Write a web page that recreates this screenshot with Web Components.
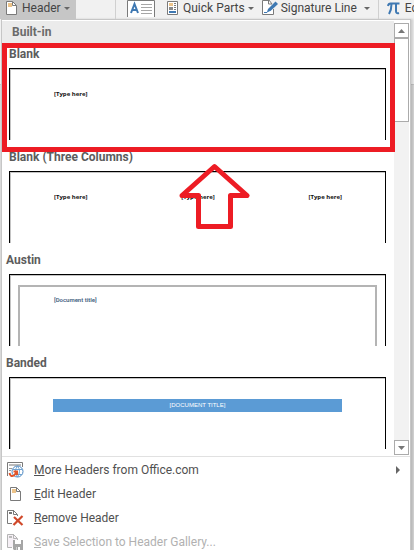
<!DOCTYPE html>
<html lang="en">
<head>
<meta charset="utf-8">
<meta name="viewport" content="width=device-width, initial-scale=1">
<title>Header gallery</title>
<style>
  body {
    margin: 0;
    height: 100vh;
    overflow: hidden;
    font: 12px/16px Roboto, "Open Sans", sans-serif;
    color: #444;
    background: linear-gradient(#f1f1f1 84px, #c6c6c6 84px, #c6c6c6 85px, #d9d9d9 85px);
  }
</style>
</head>
<body>
<header-page></header-page>

<script>
const icons = {
  page: `<svg width="11" height="14" viewBox="0 0 11 14"><path d="M.5.5h6l4 4v9H.5z" fill="#fff" stroke="#7a7a7a"/><path d="M6.500.5v4h4" fill="none" stroke="#7a7a7a"/><path d="M2 2h4v4H2z" fill="#edc48a"/></svg>`,
  textbox: `<svg width="28" height="17" viewBox="0 0 28 17"><path d="M.5.5h27v18H.5z" fill="#fff" stroke="#7a7a7a"/><path d="M14 4.500h11M14 7.500h11M14 10.500h11M14 13.500h11" stroke="#a6a6a6"/><path d="M4 13 7.500 4 11 13M5 10h5" fill="none" stroke="#3e78b2" stroke-width="2"/></svg>`,
  parts: `<svg width="11" height="14" viewBox="0 0 11 14"><path d="M.5.5h10v13H.5z" fill="#fff" stroke="#7a7a7a"/><path d="M2 2h4v3H2z" fill="#edc48a"/><path d="M7 2.500h2M7 4.500h2M7 6.500h2M7 8.500h2" stroke="#7a7a7a"/><path d="M2 6h4v3H2z" fill="#8a8a8a"/><path d="M2 10h7v2H2z" fill="#3e78b2"/></svg>`,
  signature: `<svg width="16" height="16" viewBox="0 0 16 16"><path d="M6 .5H.5v14h11V9" fill="#fff" stroke="#7a7a7a"/><path d="M6.500 0v4H10L7 0" fill="#fff" stroke="#7a7a7a"/><path d="M5 12 6 9 13.500 1.500 16 4 8.500 11z" fill="#3e78b2"/><path d="M2 12.500h3l2-2" fill="none" stroke="#3e78b2"/></svg>`,
  pi: `<svg width="13" height="13" viewBox="0 0 13 13"><path d="M1 4Q1.500 1.500 3.500 1.500H12.500M4.500 2Q4.500 8 2 12M9 2v7q0 3 3 2" fill="none" stroke="#3e78b2" stroke-width="2"/></svg>`,
  web: `<svg width="17" height="16" viewBox="0 0 17 16"><path d="M.5 14V.5h15V5" fill="none" stroke="#7a7a7a"/><path d="M2 2h12v2H2z" fill="#bbb"/><path d="M2 6.500h3M2 8.500h2" stroke="#999"/><circle cx="10.500" cy="9.500" r="5.500" fill="#fff" stroke="#4a86c0"/><path d="M10.500 4q-4 5 0 11M10.500 4q4 5 0 11M6 7.500h9M8 12.500h7" fill="none" stroke="#6fa3d2"/><path d="M2.500 11q1 4.500 4.500 2.500l3-4M6.500 9.500h3.500V13" fill="none" stroke="#e2562b" stroke-width="2"/></svg>`,
  remove: `<svg width="17" height="16" viewBox="0 0 17 16"><path d="M5 13.500H.5V.5h6l4 4V6" fill="#fff" stroke="#7a7a7a"/><path d="M6.500 0v4.500H10" fill="none" stroke="#7a7a7a"/><path d="M2 2h3v2H2z" fill="#777"/><path d="m7 7 8.500 8M15.500 6 6.500 15" stroke="#d0492a" stroke-width="2.200"/></svg>`,
  save: `<svg width="17" height="16" viewBox="0 0 17 16"><path d="M5 13.500H.5V.5h6l4 4V6" fill="#f6f0f6" stroke="#b5b5b5"/><path d="M6.500 0v4.500H10" fill="none" stroke="#b5b5b5"/><path d="M2 2h3v2H2z" fill="#bbb"/><path d="M6 6h10v10H7l-1-1z" fill="#a6a6a6"/><path d="M8 6h6v4H8zM9 13h4v3H9z" fill="#fff"/><path d="M9.500 13h1.500v3H9.500z" fill="#a6a6a6"/></svg>`
};

function define(name, html) {
  customElements.define(name, class extends HTMLElement {
    constructor() {
      super();
      this.attachShadow({ mode: 'open' });
    }

    connectedCallback() {
      this.shadowRoot.innerHTML = typeof html === 'function' ? html(this) : html;
    }
  });
}

define('app-icon', (el) => `
  <style>
    :host { display: inline-flex; flex: none; }
    svg { display: block; }
  </style>
  ${icons[el.getAttribute('name')]}
`);

define('ribbon-button', (el) => `
  <style>
    :host { display: flex; flex: none; }
    button {
      display: flex;
      align-items: center;
      gap: 5px;
      height: 19px;
      padding: 0 6px 3px;
      border: 0;
      background: none;
      font: inherit;
      color: inherit;
      white-space: nowrap;
    }
    :host([open]) button { background: #c6c6c6; }
    :host([compact]) button { gap: 3px; padding-left: 2px; }
    .caret {
      margin-left: -2px;
      border: 3px solid transparent;
      border-top-color: #666;
      border-bottom: 0;
    }
    :host([compact]) .caret { margin-left: 4px; }
  </style>
  <button type="button" aria-label="${el.getAttribute('label')}">
    <app-icon name="${el.getAttribute('icon')}"></app-icon>
    <slot></slot>
    ${el.hasAttribute('menu') ? '<span class="caret"></span>' : ''}
  </button>
`);

define('ribbon-bar', `
  <style>
    :host {
      display: flex;
      height: 19px;
      overflow: hidden;
      background: #f1f1f1;
    }
    .group { display: flex; flex: none; }
    .first { width: 115px; }
    .text { padding: 0 2px 0 5px; border-left: 1px solid #d0d0d0; }
    .symbols { padding-left: 2px; border-left: 1px solid #d0d0d0; }
  </style>
  <div class="group first">
    <ribbon-button icon="page" label="Header" menu open>Header</ribbon-button>
  </div>
  <div class="group text">
    <ribbon-button icon="textbox" label="Text Box"></ribbon-button>
    <ribbon-button icon="parts" label="Quick Parts" menu>Quick Parts</ribbon-button>
    <ribbon-button icon="signature" label="Signature Line" menu compact>Signature Line</ribbon-button>
  </div>
  <div class="group symbols">
    <ribbon-button icon="pi" label="Equation">Equation</ribbon-button>
  </div>
`);

define('gallery-item', (el) => `
  <style>
    :host { display: block; }
    button {
      display: block;
      box-sizing: border-box;
      width: 100%;
      height: 103px;
      padding: 0 8px 6px 7px;
      border: 0;
      background: none;
      font: inherit;
      text-align: left;
    }
    .title {
      display: block;
      height: 25px;
      line-height: 22px;
      font-weight: 700;
      color: #5c5c5c;
    }
    :host([outdent]) .title { margin-left: -3px; }
    .sheet {
      display: block;
      box-sizing: border-box;
      height: 72px;
      border: 1px solid #000;
      border-bottom: 0;
      box-shadow: inset 1px 1px #c4c4c4;
    }
  </style>
  <button type="button">
    <span class="title">${el.getAttribute('label')}</span>
    <span class="sheet"><slot></slot></span>
  </button>
`);

define('sheet-fields', `
  <style>
    :host {
      display: flex;
      justify-content: space-between;
      padding: 21px 43px 0 44px;
      font: 700 6px/8px "Open Sans", sans-serif;
      color: #111;
    }
  </style>
  <slot></slot>
`);

define('sheet-frame', `
  <style>
    :host {
      display: block;
      height: 61px;
      margin: 10px 8px 0;
      padding: 7px 34px 0;
      border: 2px solid #b4b4b4;
      border-bottom: 0;
      font: 600 6px/12px Roboto, sans-serif;
      color: #44637f;
      box-sizing: border-box;
    }
  </style>
  <slot></slot>
`);

define('sheet-band', `
  <style>
    :host {
      display: block;
      margin: 21px 43px 0;
      font: 6px/13px "Liberation Sans", sans-serif;
      text-align: center;
      color: #fff;
      background: #5b9bd5;
    }
  </style>
  <slot></slot>
`);

define('gallery-scrollbar', `
  <style>
    :host {
      display: flex;
      flex-direction: column;
      width: 15px;
      margin-top: 2px;
      background: #f2f2f2;
    }
    button {
      display: grid;
      place-items: center;
      flex: none;
      height: 15px;
      padding: 0;
      border: 1px solid #ababab;
      background: #fff;
    }
    .thumb {
      height: 82px;
      border: 1px solid #ababab;
      background: #fff;
    }
    .down { margin-top: auto; }
    svg { display: block; }
  </style>
  <button type="button" aria-label="Scroll up"><svg width="7" height="4"><path d="M0 4 3.500 0 7 4z" fill="#777"/></svg></button>
  <div class="thumb"></div>
  <button class="down" type="button" aria-label="Scroll down"><svg width="7" height="4"><path d="M0 0h7L3.500 4z" fill="#777"/></svg></button>
`);

define('header-gallery', `
  <style>
    :host {
      display: grid;
      grid-template-columns: 1fr 15px;
      height: 434px;
      padding: 1px 1px 1px 0;
      border-bottom: 1px solid #e1e1e1;
    }
    .list { position: relative; }
    h2 {
      margin: 0;
      padding-left: 10px;
      font: inherit;
      font-weight: 700;
      line-height: 22px;
      color: #6a6a6a;
      background: #ebebeb;
    }
    .box, .arrow { position: absolute; pointer-events: none; }
    .box {
      box-sizing: border-box;
      top: 22px;
      left: 0;
      right: -1px;
      height: 109px;
      border: 5px solid #ed1c24;
    }
    .arrow { top: 142px; left: calc(50% - 19px); }
  </style>
  <div class="list">
    <h2>Built-in</h2>
    <gallery-item label="Blank">
      <sheet-fields><span>[Type here]</span></sheet-fields>
    </gallery-item>
    <gallery-item label="Blank (Three Columns)">
      <sheet-fields><span>[Type here]</span><span>[Type here]</span><span>[Type here]</span></sheet-fields>
    </gallery-item>
    <gallery-item label="Austin" outdent>
      <sheet-frame>[Document title]</sheet-frame>
    </gallery-item>
    <gallery-item label="Banded" outdent>
      <sheet-band>[DOCUMENT TITLE]</sheet-band>
    </gallery-item>
    <div class="box"></div>
    <svg class="arrow" width="71" height="67" viewBox="0 0 71 67"><path d="M35.500 3.500 68 32.500H51.500v31h-32v-31H3z" fill="none" stroke="#ed1c24" stroke-width="5" stroke-linejoin="round"/></svg>
  </div>
  <gallery-scrollbar></gallery-scrollbar>
`);

define('menu-command', (el) => `
  <style>
    :host { display: block; }
    button {
      display: flex;
      align-items: center;
      width: 100%;
      height: 24px;
      padding: 0 10px 0 5px;
      border: 0;
      background: none;
      font: inherit;
      color: #505050;
      white-space: nowrap;
    }
    button:disabled { color: #b1b1b1; }
    .icon { display: flex; justify-content: center; width: 17px; margin-right: 10px; }
    .more {
      margin-left: auto;
      border: 4px solid transparent;
      border-left-color: #666;
      border-right: 0;
    }
  </style>
  <button type="button" ${el.hasAttribute('disabled') ? 'disabled' : ''}>
    <span class="icon"><app-icon name="${el.getAttribute('icon')}"></app-icon></span>
    <span><slot></slot></span>
    ${el.hasAttribute('submenu') ? '<span class="more"></span>' : ''}
  </button>
`);

define('header-page', `
  <style>
    :host { display: block; }
    .menu {
      margin: 0 3px 0 1px;
      border: 1px solid #c6c6c6;
      border-bottom: 0;
      background: #fff;
      box-shadow: 2px 0 2px rgba(0, 0, 0, .15);
    }
    .commands { padding-top: 1px; }
  </style>
  <ribbon-bar></ribbon-bar>
  <div class="menu">
    <header-gallery></header-gallery>
    <div class="commands">
      <menu-command icon="web" submenu><u>M</u>ore Headers from Office.com</menu-command>
      <menu-command icon="page"><u>E</u>dit Header</menu-command>
      <menu-command icon="remove"><u>R</u>emove Header</menu-command>
      <menu-command icon="save" disabled><u>S</u>ave Selection to Header Gallery...</menu-command>
    </div>
  </div>
`);
</script>
</body>
</html>
